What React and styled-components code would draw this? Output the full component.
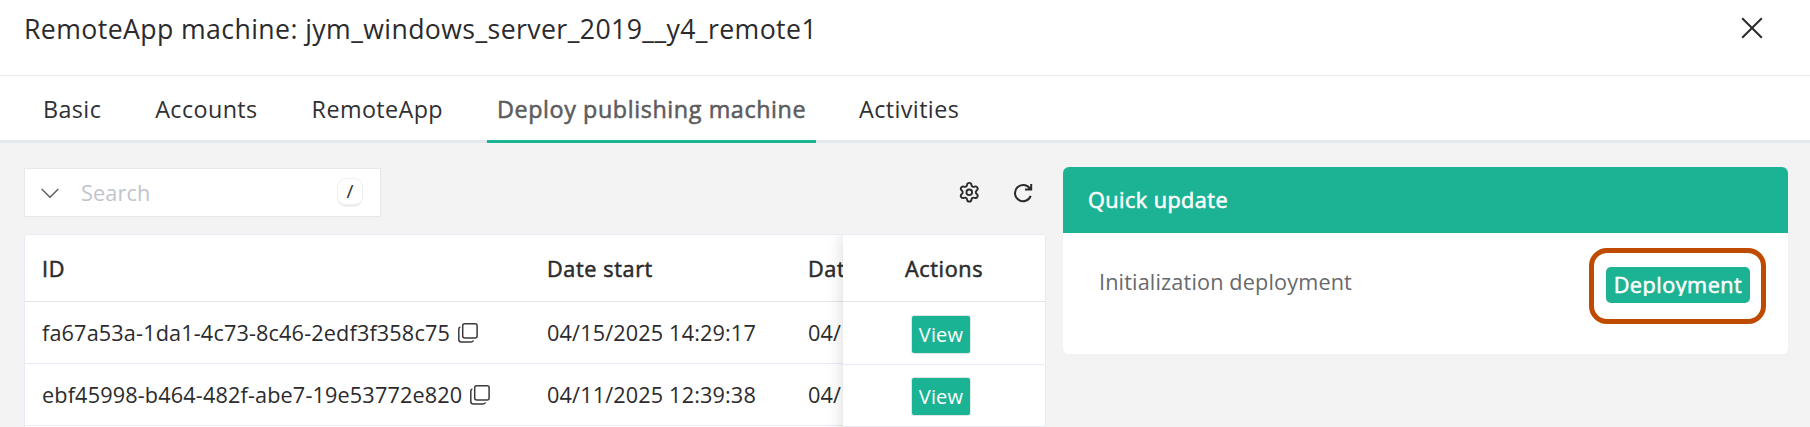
import React from "react";
import styled, { createGlobalStyle, css } from "styled-components";
import { Settings } from "lucide-react";

const Global = createGlobalStyle`
  * { box-sizing: border-box; }
  body { margin: 0; overflow: hidden; background: #f3f3f3; font-family: "Open Sans", sans-serif; color: #2b2b2d; letter-spacing: 0.14px; }
  button { font-family: inherit; letter-spacing: inherit; border: 0; padding: 0; background: none; }
`;

const medium = css`
  font-weight: 400;
  -webkit-text-stroke: 0.55px currentColor;
`;

const Page = styled.div`
  width: 1810px;
  height: 427px;
  overflow: hidden;
  display: flex;
  flex-direction: column;
`;

const Header = styled.header`
  height: 76px;
  flex: none;
  background: #fff;
  border-bottom: 1px solid #e8eaf1;
  display: flex;
  justify-content: space-between;
  align-items: flex-start;
  padding: 10px 47px 0 24px;
`;

const Title = styled.h1`
  margin: 0;
  font-size: 26.67px;
  line-height: 37px;
  font-weight: 400;
  letter-spacing: 0.4px;
  white-space: nowrap;
`;

const CloseButton = styled.button`
  display: flex;
  margin-top: 7px;
`;

const Tabs = styled.nav`
  height: 67px;
  flex: none;
  background: #fff;
  display: flex;
  padding-left: 33px;
  box-shadow: inset 0 -3px #e4e7ed;
`;

const Tab = styled.button`
  height: 67px;
  width: ${(p) => (p.$active ? "329px" : "auto")};
  padding: ${(p) => (p.$active ? 0 : "0 10px")};
  margin-right: ${(p) => p.$gap}px;
  font-size: 23.33px;
  line-height: 66px;
  text-align: center;
  white-space: nowrap;
  letter-spacing: ${(p) => (p.$active ? 0.6 : 0.4)}px;
  font-weight: 400;
  ${(p) => p.$active && medium}
  color: ${(p) => (p.$active ? "#5c5c5e" : "#2f3033")};
  border-bottom: 3px solid ${(p) => (p.$active ? "#1ab394" : "transparent")};
`;

const Main = styled.main`
  display: flex;
  flex: 1;
  padding: 24px 22px 0 24px;
  gap: 17px;
`;

const ListPane = styled.section`
  width: 1022px;
  display: flex;
  flex-direction: column;
`;

const Toolbar = styled.div`
  display: flex;
  justify-content: space-between;
  align-items: center;
  height: 49px;
  margin: 1px 0 17px;
`;

const SearchBox = styled.div`
  width: 357px;
  height: 49px;
  background: #fff;
  border: 1px solid #e8e8e8;
  display: flex;
  align-items: center;
  padding: 0 17px 0 16px;
`;

const Placeholder = styled.span`
  flex: 1;
  margin-left: 22px;
  font-size: 21.67px;
  line-height: 47px;
  color: #c0c4cc;
`;

const KeyHint = styled.kbd`
  width: 26px;
  height: 29px;
  border: 1px solid #efeff0;
  border-bottom-width: 3px;
  border-radius: 9px;
  font-family: inherit;
  font-size: 19px;
  line-height: 25px;
  text-align: center;
`;

const Tools = styled.div`
  display: flex;
  align-items: center;
  gap: 33px;
  padding-right: 13px;
`;

const Table = styled.div`
  display: flex;
  height: 300px;
  background: #fff;
  border: 1px solid #e8ebf3;
  border-radius: 4px 4px 0 0;
  overflow: hidden;
`;

const ScrollArea = styled.div`
  flex: 1;
  min-width: 0;
  overflow: hidden;
`;

const FixedColumn = styled.div`
  width: 202px;
  flex: none;
  background: #fff;
  box-shadow: 0 0 16px rgba(0, 0, 0, 0.16);
`;

const Row = styled.div`
  display: flex;
  align-items: center;
  height: ${(p) => p.$h}px;
  border-bottom: 1px solid ${(p) => (p.$head ? "#e4e4e6" : "#e8ebf3")};
  font-size: 21.67px;
  letter-spacing: ${(p) => (p.$head ? 0.6 : 0.14)}px;
  white-space: nowrap;
  ${(p) => p.$head && medium}
`;

const Cell = styled.div`
  width: ${(p) => p.$w}px;
  flex: none;
  padding-left: 17px;
  display: flex;
  align-items: center;
  gap: 8px;
`;

const ActionCell = styled.div`
  padding: ${(p) => (p.$head ? "0 0 0 62px" : "2px 0 0 69px")};
  display: flex;
`;

const ViewButton = styled.button`
  width: 58px;
  height: 37px;
  border-radius: 2px;
  background: #1ab394;
  color: #fff;
  font-size: 20px;
  line-height: 37px;
  box-shadow: 0 0 0 1px #dfe8e8;
`;

const Card = styled.aside`
  width: 725px;
  height: 187px;
  background: #fff;
  border-radius: 6px;
  overflow: hidden;
`;

const CardHeader = styled.div`
  height: 66px;
  background: #1cb394;
  color: #fff;
  padding-left: 25px;
  font-size: 21.67px;
  line-height: 66px;
  letter-spacing: 0.45px;
  ${medium}
`;

const CardBody = styled.div`
  display: flex;
  justify-content: space-between;
  padding: 15px 22px 0 36px;
`;

const CardLabel = styled.span`
  font-size: 21.67px;
  line-height: 68px;
  color: #676a6c;
`;

const Highlight = styled.div`
  width: 177px;
  height: 76px;
  border: 5px solid #be4b00;
  border-radius: 18px;
  padding: 14px 0 0 12px;
`;

const DeployButton = styled.button`
  display: flex;
  justify-content: center;
  align-items: flex-start;
  width: 144px;
  height: 36px;
  border-radius: 5px;
  background: #1cb394;
  color: #fff;
  font-size: 21.67px;
  line-height: 36px;
  letter-spacing: 0.5px;
  ${medium}
`;

const ButtonText = styled.span`
  display: block;
  height: 29px;
  overflow: hidden;
`;

const CloseIcon = () => (
  <svg width="22" height="22" viewBox="0 0 22 22" fill="none" stroke="#2b2b2d" strokeWidth="2">
    <path d="M1.2 1.2 20.8 20.8M20.8 1.2 1.2 20.8" />
  </svg>
);

const ChevronIcon = () => (
  <svg width="18" height="11" viewBox="0 0 18 11" fill="none" stroke="#606266" strokeWidth="1.5">
    <path d="M.7 2 9 10.3 17.3 2" />
  </svg>
);

const RefreshIcon = () => (
  <svg width="20" height="20" viewBox="0 0 20 20" fill="none" stroke="#2b2b2d" strokeWidth="2">
    <path d="M17.7 12.8A8.1 8.1 0 1 1 17 5.8M18.2 1V6.6H12" />
  </svg>
);

const CopyIcon = () => (
  <svg width="20" height="20" viewBox="0 0 20 20" fill="none" stroke="#3a3a3c" strokeWidth="1.5">
    <rect x="4.7" y=".8" width="14.4" height="14.2" rx="2" />
    <path d="M2.4 4Q.8 4.3.8 6V16.5Q.8 19 3.3 19H13Q15 19 15.5 17.4" />
  </svg>
);

const tabs = [
  { label: "Basic", gap: 34 },
  { label: "Accounts", gap: 34 },
  { label: "RemoteApp", gap: 34 },
  { label: "Deploy publishing machine", gap: 33, active: true },
  { label: "Activities", gap: 0 },
];

const rows = [
  { id: "fa67a53a-1da1-4c73-8c46-2edf3f358c75", start: "04/15/2025 14:29:17", end: "04/15/2025 14:31:02" },
  { id: "ebf45998-b464-482f-abe7-19e53772e820", start: "04/11/2025 12:39:38", end: "04/11/2025 12:41:20" },
];

export default function App() {
  return (
    <Page>
      <Global />
      <Header>
        <Title>RemoteApp machine: jym_windows_server_2019__y4_remote1</Title>
        <CloseButton aria-label="Close"><CloseIcon /></CloseButton>
      </Header>
      <Tabs>
        {tabs.map((t) => (
          <Tab key={t.label} $gap={t.gap} $active={t.active}>{t.label}</Tab>
        ))}
      </Tabs>
      <Main>
        <ListPane>
          <Toolbar>
            <SearchBox>
              <ChevronIcon />
              <Placeholder>Search</Placeholder>
              <KeyHint>/</KeyHint>
            </SearchBox>
            <Tools>
              <Settings size={22.5} color="#2b2b2d" strokeWidth={2} />
              <RefreshIcon />
            </Tools>
          </Toolbar>
          <Table>
            <ScrollArea>
              <Row $head $h={67}>
                <Cell $w={505}>ID</Cell>
                <Cell $w={261}>Date start</Cell>
                <Cell $w={262}>Date finished</Cell>
              </Row>
              {rows.map((r) => (
                <Row key={r.id} $h={62}>
                  <Cell $w={505}>{r.id}<CopyIcon /></Cell>
                  <Cell $w={261}>{r.start}</Cell>
                  <Cell $w={262}>{r.end}</Cell>
                </Row>
              ))}
            </ScrollArea>
            <FixedColumn>
              <Row $head $h={67}><ActionCell $head>Actions</ActionCell></Row>
              {rows.map((r, i) => (
                <Row key={r.id} $h={i ? 62 : 63}>
                  <ActionCell><ViewButton>View</ViewButton></ActionCell>
                </Row>
              ))}
            </FixedColumn>
          </Table>
        </ListPane>
        <Card>
          <CardHeader>Quick update</CardHeader>
          <CardBody>
            <CardLabel>Initialization deployment</CardLabel>
            <Highlight>
              <DeployButton><ButtonText>Deployment</ButtonText></DeployButton>
            </Highlight>
          </CardBody>
        </Card>
      </Main>
    </Page>
  );
}
